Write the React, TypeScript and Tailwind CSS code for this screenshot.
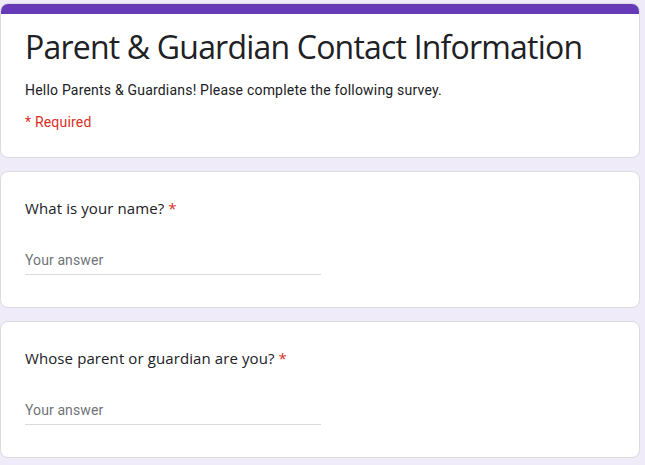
export default function App() {
  const questions = ["What is your name?", "Whose parent or guardian are you?"];

  return (
    <div className="min-h-screen bg-[#f0ebf8] pt-[3px] pr-[5px]" style={{ fontFamily: "Roboto, Arial, sans-serif" }}>
      <div className="w-[640px] flex flex-col gap-[13px]">
        {/* Header card */}
        <div className="bg-white rounded-lg border border-[#dadce0] overflow-hidden">
          <div className="h-[10px] bg-[#673ab7]" />
          <div className="px-6 pt-[13px] pb-[25px]">
            <h1 className="text-[32px] leading-[40px] text-[#202124] font-['Open_Sans',sans-serif] tracking-[-0.8px]">
              Parent &amp; Guardian Contact Information
            </h1>
            <p className="mt-[13px] text-sm leading-5 text-[#202124] tracking-[0.2px]">
              Hello Parents &amp; Guardians! Please complete the following survey.
            </p>
            <p className="mt-[12px] text-sm leading-5 text-[#d93025] tracking-[0.2px]">* Required</p>
          </div>
        </div>

        {questions.map((q) => (
          <div key={q} className="bg-white rounded-lg border border-[#dadce0] px-6 pt-[24px] pb-[32px]">
            <div className="text-[15px] leading-6 text-[#202124] font-['Open_Sans',sans-serif] tracking-[0.1px]">
              {q} <span className="text-[#d93025]">*</span>
            </div>
            <div className="mt-[28px] w-[296px] border-b border-[#dadce0] pb-[2px]">
              <span className="text-sm leading-5 text-[#70757a] tracking-[0.1px]">Your answer</span>
            </div>
          </div>
        ))}
      </div>
    </div>
  );
}
